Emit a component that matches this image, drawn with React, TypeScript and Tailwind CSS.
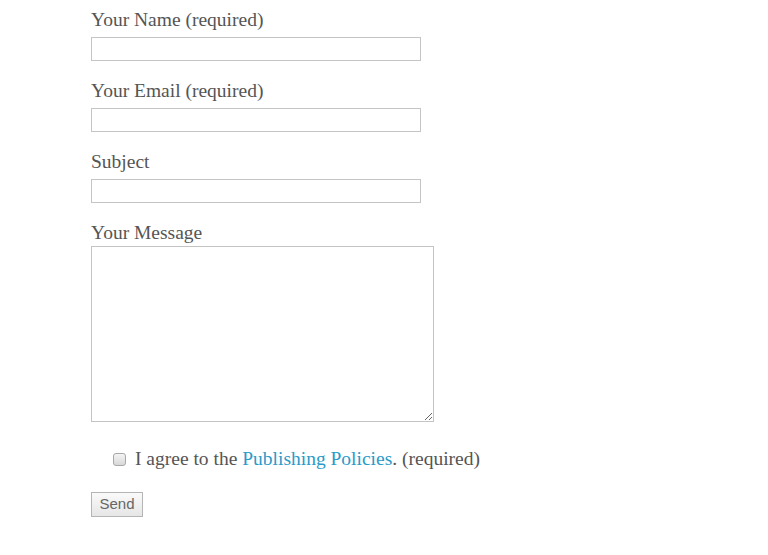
import * as React from 'react'

const Field: React.FC<{ label: string; className?: string }> = ({ label, className }) => (
  <div className={className ?? 'mb-[17px]'}>
    <label className="block h-[26px] leading-[26px] text-[19.5px]">{label}</label>
    <input
      type="text"
      className="mt-[4px] block h-[24px] w-[330px] border border-[#c4c4c4] bg-white outline-none"
    />
  </div>
)

const App: React.FC = () => {
  return (
    <div
      className="min-h-[555px] w-[768px] bg-white pl-[91px] pt-[7px] text-[#555]"
      style={{ fontFamily: '"Liberation Serif", serif' }}
    >
      <form action="#">
        <Field label="Your Name (required)" />
        <Field label="Your Email (required)" />
        <Field label="Subject" />
        <div>
          <label className="block h-[26px] leading-[26px] text-[19.5px]">Your Message</label>
          <textarea className="block h-[176px] w-[343px] border border-[#c4c4c4] bg-white outline-none" />
        </div>
        <div className="mt-[24px] flex items-center pl-[22px]">
          <input
            type="checkbox"
            className="h-[13px] w-[13px] appearance-none rounded-[3px] border border-[#a8a8a8] bg-gradient-to-b from-[#f4f4f4] to-[#d8d8d8]"
          />
          <span className="ml-[9px] text-[19.5px] leading-[26px]">
            I agree to the <a href="#" className="text-[#2a9ac8]">Publishing Policies</a>. (required)
          </span>
        </div>
        <button
          type="submit"
          className="mt-[20px] h-[25px] w-[52px] border border-[#b5b5b5] bg-gradient-to-b from-[#fafafa] to-[#e6e6e6] text-[15px] text-[#666]"
          style={{ fontFamily: 'Arial, "Liberation Sans", sans-serif' }}
        >
          Send
        </button>
      </form>
    </div>
  )
}

export default App
